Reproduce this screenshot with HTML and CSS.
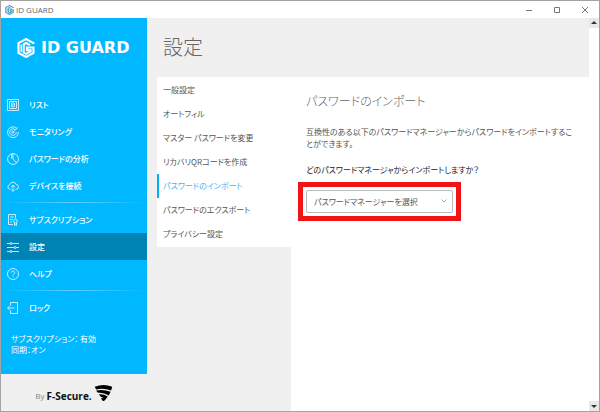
FILE: index.html
```html
<!DOCTYPE html>
<html lang="ja">
<head>
<meta charset="utf-8">
<title>ID GUARD</title>
<link rel="stylesheet" href="styles.css">
</head>
<body>
<svg class="defs" aria-hidden="true">
  <symbol id="mark" viewBox="0 0 18 20">
    <path d="M16.5 6V5.200L9 1 1.500 5.200v9.600L9 19l7.500-4.200V9.500H10v2.600h3.600v1.200L9 15.800l-2.300-1.300V6.300L9 5l4 2.200" fill="none" stroke="currentColor" stroke-width="2.100"/>
    <path d="M4.200 6.500v7.500" fill="none" stroke="currentColor" stroke-width="1.500"/>
  </symbol>
</svg>
<div class="window">
  <header class="titlebar">
    <svg class="app-icon"><use href="#mark"/></svg>
    <span class="app-name">ID GUARD</span>
    <button class="win-btn" aria-label="最小化"><svg viewBox="0 0 8 8"><path d="M1 4.5h6"/></svg></button>
    <button class="win-btn" aria-label="最大化"><svg viewBox="0 0 8 8"><path d="M1.500 1.500h5v5h-5z"/></svg></button>
    <button class="win-btn" aria-label="閉じる"><svg viewBox="0 0 8 8"><path d="M1 1l6 6M7 1L1 7"/></svg></button>
  </header>
  <div class="body">
    <aside class="sidebar">
      <div class="brand"><svg class="brand-mark"><use href="#mark"/></svg><span>ID GUARD</span></div>
      <nav class="menu">
        <a href="#"><svg viewBox="0 0 12 12"><path d="M.5.5h11v11H.5zM2.500 2.500h7v7h-7zM4.500 4v4M7.500 4v4M6 2.500v7M4 4.500h1M7 4.500h1"/></svg>リスト</a>
        <a href="#"><svg viewBox="0 0 12 12"><path d="M9.600 2.200A5.400 5.400 0 1 0 11.400 6M8.200 3.600A3.300 3.300 0 1 0 9.300 6.200M6 6l5-4.600M7.200 6A1.200 1.200 0 1 1 6 4.800"/></svg>モニタリング</a>
        <a href="#"><svg viewBox="0 0 12 12"><circle cx="6" cy="6" r="5.400"/><path d="M6 .6V6l3.700 4M4.600 1v4.600"/></svg>パスワードの分析</a>
        <a href="#"><svg viewBox="0 0 12 12"><path d="M3.700 9.200H2.800a2.300 2.300 0 0 1-.2-4.500A3.500 3.500 0 0 1 9.300 4.600a2.300 2.300 0 0 1-.1 4.600h-.9M6 11.300V5.200M4 7l2-2 2 2M4.300 9.700L6 11.400l1.700-1.700"/></svg>デバイスを接続</a>
        <hr>
        <a href="#"><svg viewBox="0 0 12 12"><path d="M6 10.500H1.500V.5h7v4M3.200 3h3.600M3.200 5.500h2.500M3.200 8h2"/><circle cx="8.500" cy="7" r="1.800"/><path d="M7.500 8.500v3l1-.7 1 .7v-3"/></svg>サブスクリプション</a>
        <a href="#" class="current" aria-current="page"><svg viewBox="0 0 12 12"><path d="M0 2.500h3M5 2.500h7M0 6.500h7M9 6.500h3M0 10.500h3M5 10.500h7"/><circle cx="4" cy="2.500" r="1"/><circle cx="8" cy="6.500" r="1"/><circle cx="4" cy="10.500" r="1"/></svg>設定</a>
        <a href="#"><svg viewBox="0 0 12 12"><circle cx="6" cy="6" r="5.500"/><path d="M4.300 4.700a1.700 1.700 0 1 1 2.600 1.400c-.6.4-.9.700-.9 1.400M6 8.400v1"/></svg>ヘルプ</a>
        <hr>
        <a href="#"><svg viewBox="0 0 12 12"><path d="M3.500 3.500v-3h7v11h-7v-3M7.500 6H.7M2.800 3.800L.6 6l2.200 2.200"/></svg>ロック</a>
      </nav>
      <p class="status">サブスクリプション： 有効<br>同期：オン</p>
      <footer class="maker">
        <span class="by">By</span><b>F-Secure.</b>
        <svg viewBox="0 0 20 18"><path d="M.8 2.300Q10-1.200 19.200 2.300L18 6.400Q10 3.300 2.200 5.200zM2.300 6.300q8-1.400 15.200 1.500l-2 3.800Q10 8.400 5.300 8.800 3.300 9 2.300 6.300zM5 10.300q5-.6 9.500 2.400L11.700 16.300q-1.500 1.900-2.800.6L7.200 14.600q2 0 2.700-.6Q7 13.800 5 10.300z"/></svg>
      </footer>
    </aside>
    <main class="main">
      <h1>設定</h1>
      <div class="panes">
        <nav class="tabs">
          <a href="#">一般設定</a>
          <a href="#">オートフィル</a>
          <a href="#">マスター パスワードを変更</a>
          <a href="#">リカバリQRコードを作成</a>
          <a href="#" class="active" aria-current="page">パスワードのインポート</a>
          <a href="#">パスワードのエクスポート</a>
          <a href="#">プライバシー設定</a>
        </nav>
        <section class="content">
          <h2>パスワードのインポート</h2>
          <p>互換性のある以下のパスワードマネージャーからパスワードをインポートすることができます。</p>
          <label for="manager">どのパスワードマネージャからインポートしますか？</label>
          <div class="picker">
            <select id="manager"><option>パスワードマネージャーを選択</option></select>
            <svg viewBox="0 0 6 4" aria-hidden="true"><path d="M.5.5L3 3 5.500.5"/></svg>
          </div>
        </section>
      </div>
    </main>
    <div class="scrollbar">
      <button aria-label="上へ"><svg viewBox="0 0 6 4"><path d="M3 0l3 3H0z"/></svg></button>
      <button aria-label="下へ"><svg viewBox="0 0 6 4"><path d="M0 1h6L3 4z"/></svg></button>
    </div>
  </div>
</div>
</body>
</html>
```
FILE: styles.css
```css
* { box-sizing: border-box; }

body {
  margin: 0;
  color: #555;
  font: 8px/12px "Noto Sans CJK JP", sans-serif;
  font-feature-settings: "palt";
}

a { color: inherit; text-decoration: none; }
button { padding: 0; border: 0; background: none; }
h1, h2 { margin: 0; font-weight: 300; }
p { margin: 0; }
.defs { position: absolute; width: 0; height: 0; }

.window {
  display: flex;
  flex-direction: column;
  min-height: 100vh;
  border: 1px solid #a3a3a3;
  background: #fff;
}

.titlebar {
  display: flex;
  align-items: center;
  height: 17px;
  padding-left: 4px;
}
.app-icon { width: 9px; height: 10px; color: #4a9cc9; }
.app-name {
  flex: 1;
  margin-left: 2px;
  color: #666;
  font: 8px/12px "Open Sans", sans-serif;
}
.win-btn { display: grid; place-items: center; width: 28px; height: 17px; }
.win-btn svg { width: 8px; height: 8px; fill: none; stroke: #777; }

.body { display: flex; flex: 1; }

.sidebar {
  display: flex;
  flex: 0 0 146px;
  flex-direction: column;
  background: #00b8ff;
  color: #fff;
}
.brand {
  display: flex;
  align-items: center;
  gap: 6px;
  height: 60px;
  padding-left: 16px;
  font: bold 16px/20px "DejaVu Sans", sans-serif;
  white-space: nowrap;
}
.brand-mark { width: 18px; height: 20px; }
.menu { margin-top: 13px; }
.menu a {
  display: flex;
  align-items: center;
  gap: 10px;
  height: 27px;
  padding-left: 6px;
  font-weight: 500;
}
.menu svg { width: 12px; height: 12px; fill: none; stroke: #d8f4ff; stroke-width: 0.9; }
.menu .current { background: #0083b5; }
.menu hr { height: 1px; margin: 3px 0; border: 0; background: linear-gradient(90deg, #00b8ff, #62d2ff 50%, #00b8ff); }
.status { margin-top: 12px; padding-left: 10px; line-height: 11px; }
.maker {
  display: flex;
  align-items: flex-end;
  justify-content: center;
  gap: 2px;
  height: 37px;
  margin-top: auto;
  padding-bottom: 9px;
  background: #f0f0f0;
  color: #888;
  font: 8px/12px "Open Sans", sans-serif;
}
.maker b { color: #111; font-size: 10px; }
.maker svg { width: 19px; height: 18px; }

.main { display: flex; flex: 1; flex-direction: column; background: #f0f0f0; }
h1 { height: 59px; padding: 14px 16px; color: #666; font-size: 20px; line-height: 30px; }
.panes { display: flex; flex: 1; align-items: flex-start; padding-left: 10px; }
.tabs { flex: 0 0 134px; padding: 1px 0; background: #fff; }
.tabs a { display: block; padding-left: 6px; line-height: 24px; }
.tabs .active { padding-left: 4px; border-left: 2px solid #00b0f5; color: #45b5f2; }

.content { flex: 1; align-self: stretch; padding: 14px 15px; background: #fff; }
h2 { margin-bottom: 15px; color: #666; font-size: 12px; line-height: 20px; }
.content label { display: block; margin: 14px 0; color: #222; }
.picker { position: relative; width: 147px; outline: 5px solid #f01418; outline-offset: 3px; }
.picker select {
  display: block;
  width: 100%;
  height: 23px;
  padding: 0 7px;
  border: 1px solid #bbb;
  border-radius: 2px;
  background: #fff;
  color: #555;
  font: inherit;
  font-feature-settings: inherit;
  appearance: none;
}
.picker svg { position: absolute; top: 9px; right: 6px; width: 6px; height: 4px; fill: none; stroke: #6cc4f5; }

.scrollbar {
  display: flex;
  flex: 0 0 10px;
  flex-direction: column;
  justify-content: space-between;
  background: #fff;
}
.scrollbar button { display: grid; place-items: center; height: 10px; background: #e8e8e8; }
.scrollbar svg { width: 6px; height: 4px; fill: #333; }
```
